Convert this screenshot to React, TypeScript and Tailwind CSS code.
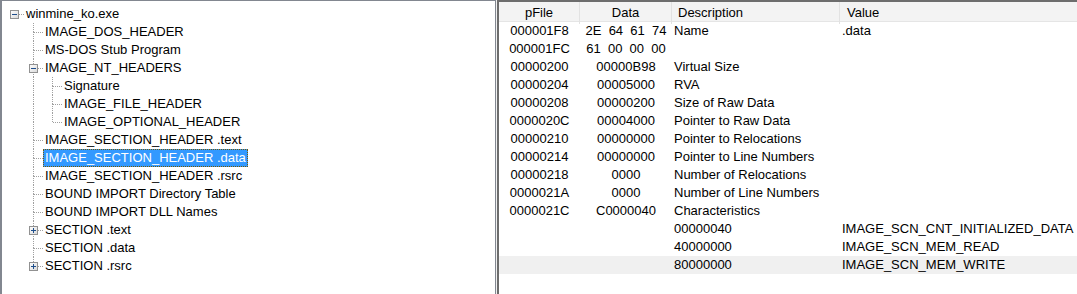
import React from 'react';

type Box = 'plus' | 'minus' | undefined;

interface TreeRow {
  label: string;
  level: number;
  up: boolean;
  down: boolean;
  box?: Box;
  ancestors?: boolean[];
  selected?: boolean;
}

const treeRows: TreeRow[] = [
  { label: 'winmine_ko.exe', level: 0, up: false, down: false, box: 'minus' },
  { label: 'IMAGE_DOS_HEADER', level: 1, up: true, down: true },
  { label: 'MS-DOS Stub Program', level: 1, up: true, down: true },
  { label: 'IMAGE_NT_HEADERS', level: 1, up: true, down: true, box: 'minus' },
  { label: 'Signature', level: 2, up: true, down: true, ancestors: [false, true] },
  { label: 'IMAGE_FILE_HEADER', level: 2, up: true, down: true, ancestors: [false, true] },
  { label: 'IMAGE_OPTIONAL_HEADER', level: 2, up: true, down: false, ancestors: [false, true] },
  { label: 'IMAGE_SECTION_HEADER .text', level: 1, up: true, down: true },
  { label: 'IMAGE_SECTION_HEADER .data', level: 1, up: true, down: true, selected: true },
  { label: 'IMAGE_SECTION_HEADER .rsrc', level: 1, up: true, down: true },
  { label: 'BOUND IMPORT Directory Table', level: 1, up: true, down: true },
  { label: 'BOUND IMPORT DLL Names', level: 1, up: true, down: true },
  { label: 'SECTION .text', level: 1, up: true, down: true, box: 'plus' },
  { label: 'SECTION .data', level: 1, up: true, down: true },
  { label: 'SECTION .rsrc', level: 1, up: true, down: false, box: 'plus' },
];

const tableRows: [string, string, string, string][] = [
  ['000001F8', '2E  64  61  74', 'Name', '.data'],
  ['000001FC', '61  00  00  00', '', ''],
  ['00000200', '00000B98', 'Virtual Size', ''],
  ['00000204', '00005000', 'RVA', ''],
  ['00000208', '00000200', 'Size of Raw Data', ''],
  ['0000020C', '00004000', 'Pointer to Raw Data', ''],
  ['00000210', '00000000', 'Pointer to Relocations', ''],
  ['00000214', '00000000', 'Pointer to Line Numbers', ''],
  ['00000218', '0000', 'Number of Relocations', ''],
  ['0000021A', '0000', 'Number of Line Numbers', ''],
  ['0000021C', 'C0000040', 'Characteristics', ''],
  ['', '', '00000040', 'IMAGE_SCN_CNT_INITIALIZED_DATA'],
  ['', '', '40000000', 'IMAGE_SCN_MEM_READ'],
  ['', '', '80000000', 'IMAGE_SCN_MEM_WRITE'],
];

const ExpandBox = ({ kind }: { kind: 'plus' | 'minus' }) => (
  <svg className="absolute left-[5px] top-[5px]" width="9" height="9" viewBox="0 0 9 9">
    <defs>
      <linearGradient id="bx" x1="0" y1="0" x2="1" y2="1">
        <stop offset="0" stopColor="#ffffff" />
        <stop offset="1" stopColor="#d8d8d8" />
      </linearGradient>
    </defs>
    <rect x="0.5" y="0.5" width="8" height="8" fill="url(#bx)" stroke="#919191" />
    <path d="M2 4.5h5" stroke="#1f4e8c" strokeWidth="1" />
    {kind === 'plus' && <path d="M4.5 2v5" stroke="#1f4e8c" strokeWidth="1" />}
  </svg>
);

const GuideCell = ({ up, down, box, own }: { up: boolean; down: boolean; box?: Box; own: boolean }) => (
  <div className="relative h-full w-[19px] shrink-0">
    {up && <div className="absolute left-[9px] top-0 h-[9px] border-l border-dotted border-[#a0a0a0]" />}
    {down && <div className="absolute left-[9px] top-[9px] bottom-0 border-l border-dotted border-[#a0a0a0]" />}
    {own && <div className="absolute left-[10px] top-[9px] w-[9px] border-t border-dotted border-[#a0a0a0]" />}
    {box && <ExpandBox kind={box} />}
  </div>
);

const TreeLine = ({ row }: { row: TreeRow }) => {
  const cols = [];
  for (let i = 0; i < row.level; i++) {
    const on = row.ancestors?.[i] ?? false;
    cols.push(<GuideCell key={i} up={on} down={on} own={false} />);
  }
  cols.push(<GuideCell key="own" up={row.up} down={row.down} box={row.box} own />);

  return (
    <div className="flex h-[18px] items-center pl-[3px]">
      {cols}
      <span
        className={
          row.selected
            ? 'h-[18px] whitespace-pre bg-[#3399ff] px-[2px] leading-[18px] text-white outline-1 outline-dotted -outline-offset-1 outline-[#7a5a00]'
            : 'h-[18px] whitespace-pre px-[2px] leading-[18px] text-black'
        }
      >
        {row.label}
      </span>
    </div>
  );
};

export default function App() {
  return (
    <div
      className="flex h-[294px] w-[1077px] overflow-hidden bg-[#f0f0f0] text-[13px]"
      style={{ fontFamily: '"Liberation Sans", Arial, sans-serif' }}
    >
      <div className="h-[310px] w-[496px] shrink-0 border-t border-r border-l-2 border-[#828790] bg-white pt-[4px]">
        {treeRows.map((row) => (
          <TreeLine key={row.label} row={row} />
        ))}
      </div>

      <div className="ml-[1px] h-[310px] flex-1 border-t-2 border-l-2 border-[#6d6d6d] bg-white">
        <div className="grid h-[20px] grid-cols-[81px_92px_168px_1fr] border-b border-[#e5e5e5] bg-[#f3f3f3] leading-[22px] text-black">
          <div className="border-r border-[#e2e2e2] text-center">pFile</div>
          <div className="border-r border-[#e2e2e2] text-center">Data</div>
          <div className="border-r border-[#e2e2e2] pl-[6px]">Description</div>
          <div className="pl-[7px]">Value</div>
        </div>
        {tableRows.map((r, i) => (
          <div
            key={i}
            className={
              i === tableRows.length - 1
                ? 'grid h-[18px] grid-cols-[81px_92px_168px_1fr] bg-[#f0f0f0] leading-[18px] text-black'
                : 'grid h-[18px] grid-cols-[81px_92px_168px_1fr] leading-[18px] text-black'
            }
          >
            <div className="text-center">{r[0]}</div>
            <div className="whitespace-pre text-center">{r[1]}</div>
            <div className="pl-[2px]">{r[2]}</div>
            <div className="pl-[2px]">{r[3]}</div>
          </div>
        ))}
      </div>
    </div>
  );
}
